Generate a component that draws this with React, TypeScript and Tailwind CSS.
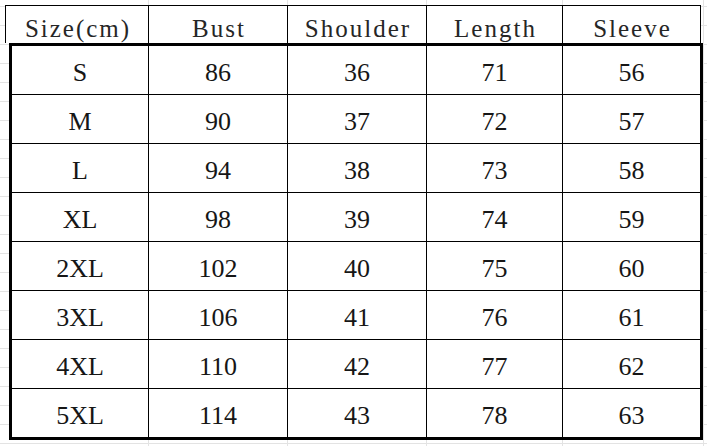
import React from "react"

const headers = ["Size(cm)", "Bust", "Shoulder", "Length", "Sleeve"]

const rows = [
  ["S", "86", "36", "71", "56"],
  ["M", "90", "37", "72", "57"],
  ["L", "94", "38", "73", "58"],
  ["XL", "98", "39", "74", "59"],
  ["2XL", "102", "40", "75", "60"],
  ["3XL", "106", "41", "76", "61"],
  ["4XL", "110", "42", "77", "62"],
  ["5XL", "114", "43", "78", "63"],
]

const headerCols = ["w-[143px]", "w-[139px]", "w-[139px]", "w-[136px]", "w-[138px]"]
const bodyCols = ["w-[137px]", "w-[139px]", "w-[139px]", "w-[136px]", "w-[137px]"]

export default function App() {
  return (
    <div className="w-[707px] h-[446px] overflow-hidden bg-white bg-[image:repeating-linear-gradient(to_bottom,transparent_0,transparent_6px,#e3e3e3_6px,#e3e3e3_7px,transparent_7px,transparent_19px),linear-gradient(to_right,transparent_148px,#e3e3e3_148px,#e3e3e3_149px,transparent_149px,transparent_287px,#e3e3e3_287px,#e3e3e3_288px,transparent_288px,transparent_426px,#e3e3e3_426px,#e3e3e3_427px,transparent_427px,transparent_562px,#e3e3e3_562px,#e3e3e3_563px,transparent_563px,transparent_703px,#e3e3e3_703px,#e3e3e3_704px,transparent_704px)] pt-[5px] pl-[5px]">
      {/* header row */}
      <div className="flex w-[696px] h-[38px] border-t border-l border-black bg-white">
        {headers.map((h, i) => (
          <div
            key={h}
            className={`${headerCols[i]} border-r border-black flex items-center justify-center pt-[8px] pl-[2px] text-[25px] leading-none tracking-[2px] text-[#262626] font-['Liberation_Serif',serif]`}
          >
            {h}
          </div>
        ))}
      </div>

      {/* body */}
      <div className="ml-[4px] w-[694px] border-[3px] border-black bg-white">
        {rows.map((r, ri) => (
          <div
            key={r[0]}
            className={`flex ${ri < rows.length - 1 ? "h-[49px] border-b" : "h-[48px]"} border-black`}
          >
            {r.map((c, ci) => (
              <div
                key={ci}
                className={`${bodyCols[ci]} ${ci < 4 ? "border-r border-black" : ""} flex items-center justify-center pt-[5px] text-[26px] leading-none text-[#161616] font-['Liberation_Serif',serif]`}
              >
                {c}
              </div>
            ))}
          </div>
        ))}
      </div>
    </div>
  )
}
